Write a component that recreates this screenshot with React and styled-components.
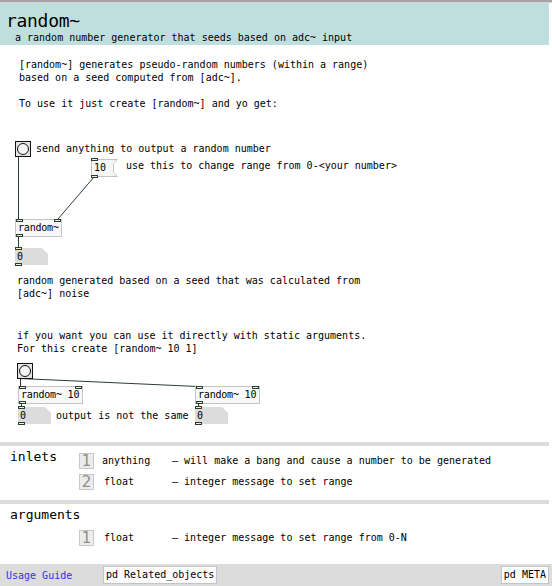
import React from 'react'
import styled, { createGlobalStyle } from 'styled-components'

const GlobalStyle = createGlobalStyle`
  html, body {
    margin: 0;
    padding: 0;
    background: #ffffff;
  }
  body {
    font-family: "DejaVu Sans Mono", "Liberation Mono", monospace;
    font-size: 10px;
    color: #000;
  }
`

const WIRE = '#2b3d2b'

const Page = styled.div`
  width: 552px;
  height: 586px;
  display: flex;
  flex-direction: column;
  overflow: hidden;
`

const TopRule = styled.div`
  height: 2px;
  background: #a4a4a4;
  border-bottom: 1px solid #d4d4d4;
`

const Header = styled.div`
  width: 549px;
  height: 42px;
  background: #bfdfdf;
  display: flex;
  flex-direction: column;
`

const Title = styled.div`
  font-size: 18px;
  line-height: 18px;
  padding: 9px 0 0 6px;
  letter-spacing: -0.3px;
`

const Subtitle = styled.div`
  font-size: 10px;
  line-height: 12px;
  padding: 2px 0 0 15px;
`

const Canvas = styled.div`
  position: relative;
  height: 397px;
`

const Comment = styled.div`
  position: absolute;
  left: ${p => p.$x}px;
  top: ${p => p.$y}px;
  line-height: 13px;
  white-space: pre;
`

const Node = styled.div`
  position: absolute;
  left: ${p => p.$x}px;
  top: ${p => p.$y}px;
  width: ${p => p.$w}px;
  height: ${p => p.$h || 17}px;
  box-sizing: border-box;
  line-height: ${p => (p.$h || 17) - 2}px;
  padding-left: 2px;
  white-space: nowrap;
`

const ObjBox = styled(Node)`
  background: #f8f8f8;
  border: 1px solid #c4c4c4;
  letter-spacing: -0.2px;
`

const MsgBox = styled(Node)`
  border: none;
  padding-left: 3px;
  line-height: ${p => p.$h || 17}px;
`

const NumBox = styled(Node)`
  background: #dcdcdc;
  clip-path: polygon(0 0, calc(100% - 6px) 0, 100% 6px, 100% 100%, 0 100%);
  line-height: ${p => p.$h || 17}px;
`

const NumWrap = styled.div`
  position: absolute;
  left: ${p => p.$x}px;
  top: ${p => p.$y}px;
  width: 33px;
  height: 17px;
`

const Port = styled.div`
  position: absolute;
  ${p => (p.$bottom ? 'bottom: -1px;' : 'top: -1px;')}
  ${p => (p.$right ? 'right: 0;' : 'left: 0;')}
  width: 7px;
  height: 3px;
  box-sizing: border-box;
  border: 1px solid ${WIRE};
  background: #e8f0e8;
`

const Bang = styled.div`
  position: absolute;
  left: ${p => p.$x}px;
  top: ${p => p.$y}px;
  width: 16px;
  height: 16px;
  box-sizing: border-box;
  border: 1px solid #111;
  background: #e4e4e4;
  display: flex;
  align-items: center;
  justify-content: center;
`

const BangCircle = styled.div`
  width: 12px;
  height: 12px;
  box-sizing: border-box;
  border-radius: 50%;
  border: 1px solid #111;
  background: #f6f6f6;
`

const Wires = styled.svg`
  position: absolute;
  left: 0;
  top: 0;
  width: 552px;
  height: 397px;
  pointer-events: none;
`

const FlagSvg = styled.svg`
  position: absolute;
  left: 0;
  top: 0;
`

const Section = styled.div`
  width: 549px;
  border-top: 4px solid #dcdcdc;
  height: ${p => p.$h}px;
  box-sizing: border-box;
  display: flex;
  align-items: flex-start;
`

const SectionLabel = styled.div`
  width: 69px;
  padding: 4px 0 0 10px;
  font-size: 13px;
  line-height: 14px;
  flex: none;
`

const Rows = styled.div`
  display: flex;
  flex-direction: column;
  gap: 6px;
  padding-top: ${p => p.$top}px;
`

const Row = styled.div`
  display: flex;
  align-items: center;
  height: 15px;
`

const PortNum = styled.div`
  width: 15px;
  height: 16px;
  box-sizing: border-box;
  border: 1px solid #c8c8c8;
  background: #ececec;
  color: #8e8e8e;
  font-family: "DejaVu Sans", "Liberation Sans", sans-serif;
  font-size: 15px;
  line-height: 15px;
  text-align: center;
`

const TypeName = styled.div`
  padding-left: ${p => p.$pad || 8}px;
  width: ${p => 78 - (p.$pad || 8)}px;
`

const Desc = styled.div`
  white-space: pre;
`

const Footer = styled.div`
  margin-top: auto;
  height: 22px;
  background: #dcdcdc;
  display: flex;
  align-items: center;
  padding: 0 3px 0 6px;
`

const Link = styled.div`
  color: #3a2ee6;
  width: 97px;
`

const SubPatch = styled.div`
  height: 18px;
  box-sizing: border-box;
  border: 1px solid #c4c4c4;
  background: #fcfcfc;
  padding: 0 2px;
  line-height: 16px;
  margin-left: ${p => (p.$push ? 'auto' : '0')};
`

function Msg({ x, y, w, h = 18, children }) {
  const pts = `0.5,0.5 ${w - 0.5},0.5 ${w - 4.5},4.5 ${w - 4.5},${h - 4.5} ${w - 0.5},${h - 0.5} 0.5,${h - 0.5}`
  return (
    <MsgBox $x={x} $y={y} $w={w} $h={h}>
      <FlagSvg width={w} height={h}>
        <polygon points={pts} fill="#f6f6f6" stroke="#c4c4c4" />
      </FlagSvg>
      <span style={{ position: 'relative' }}>{children}</span>
      <Port />
      <Port $bottom />
    </MsgBox>
  )
}

function Num({ x, y }) {
  return (
    <NumWrap $x={x} $y={y}>
      <NumBox $x={0} $y={0} $w={33}>0</NumBox>
      <Port />
      <Port $bottom />
    </NumWrap>
  )
}

function Obj({ x, y, w, children }) {
  return (
    <ObjBox $x={x} $y={y} $w={w} $h={18}>
      {children}
      <Port />
      <Port $right />
      <Port $bottom />
    </ObjBox>
  )
}

export default function App() {
  return (
    <Page>
      <GlobalStyle />
      <TopRule />
      <Header>
        <Title>random~</Title>
        <Subtitle>a random number generator that seeds based on adc~ input</Subtitle>
      </Header>

      <Canvas>
        <Wires viewBox="0 0 552 397">
          <g stroke={WIRE} strokeWidth="1" fill="none">
            <line x1="18.5" y1="111" x2="18.5" y2="174" />
            <line x1="94" y1="132" x2="58" y2="174" />
            <line x1="18.5" y1="192" x2="18.5" y2="203" />
            <line x1="20.5" y1="333" x2="20.5" y2="341" />
            <line x1="20" y1="333.5" x2="198" y2="341.5" />
            <line x1="21.5" y1="358" x2="21.5" y2="362" />
            <line x1="198.5" y1="358" x2="198.5" y2="362" />
          </g>
        </Wires>

        <Comment $x={19} $y={13}>
          {'[random~] generates pseudo-random numbers (within a range)\nbased on a seed computed from [adc~].'}
        </Comment>
        <Comment $x={19} $y={52}>To use it just create [random~] and yo get:</Comment>

        <Bang $x={15} $y={96}><BangCircle /></Bang>
        <Comment $x={36} $y={97}>send anything to output a random number</Comment>

        <Msg x={91} y={114} w={27}>10</Msg>
        <Comment $x={126} $y={114}>use this to change range from 0-&lt;your number&gt;</Comment>

        <Obj x={15} y={174} w={47}>random~</Obj>
        <Num x={15} y={203} />

        <Comment $x={17} $y={229}>
          {'random generated based on a seed that was calculated from\n[adc~] noise'}
        </Comment>
        <Comment $x={17} $y={284}>
          {'if you want you can use it directly with static arguments.\nFor this create [random~ 10 1]'}
        </Comment>

        <Bang $x={17} $y={318}><BangCircle /></Bang>
        <Obj x={18} y={341} w={65}>random~ 10</Obj>
        <Obj x={195} y={341} w={65}>random~ 10</Obj>
        <Num x={18} y={362} />
        <Num x={195} y={362} />
        <Comment $x={56} $y={364}>output is not the same</Comment>
      </Canvas>

      <Section $h={58}>
        <SectionLabel>inlets</SectionLabel>
        <Rows $top={7}>
          <Row>
            <PortNum>1</PortNum>
            <TypeName>anything</TypeName>
            <Desc>– will make a bang and cause a number to be generated</Desc>
          </Row>
          <Row>
            <PortNum>2</PortNum>
            <TypeName $pad={10}>float</TypeName>
            <Desc>– integer message to set range</Desc>
          </Row>
        </Rows>
      </Section>

      <Section $h={60}>
        <SectionLabel>arguments</SectionLabel>
        <Rows $top={26}>
          <Row>
            <PortNum>1</PortNum>
            <TypeName $pad={10}>float</TypeName>
            <Desc>– integer message to set range from 0-N</Desc>
          </Row>
        </Rows>
      </Section>

      <Footer>
        <Link>Usage Guide</Link>
        <SubPatch>pd Related_objects</SubPatch>
        <SubPatch $push>pd META</SubPatch>
      </Footer>
    </Page>
  )
}
